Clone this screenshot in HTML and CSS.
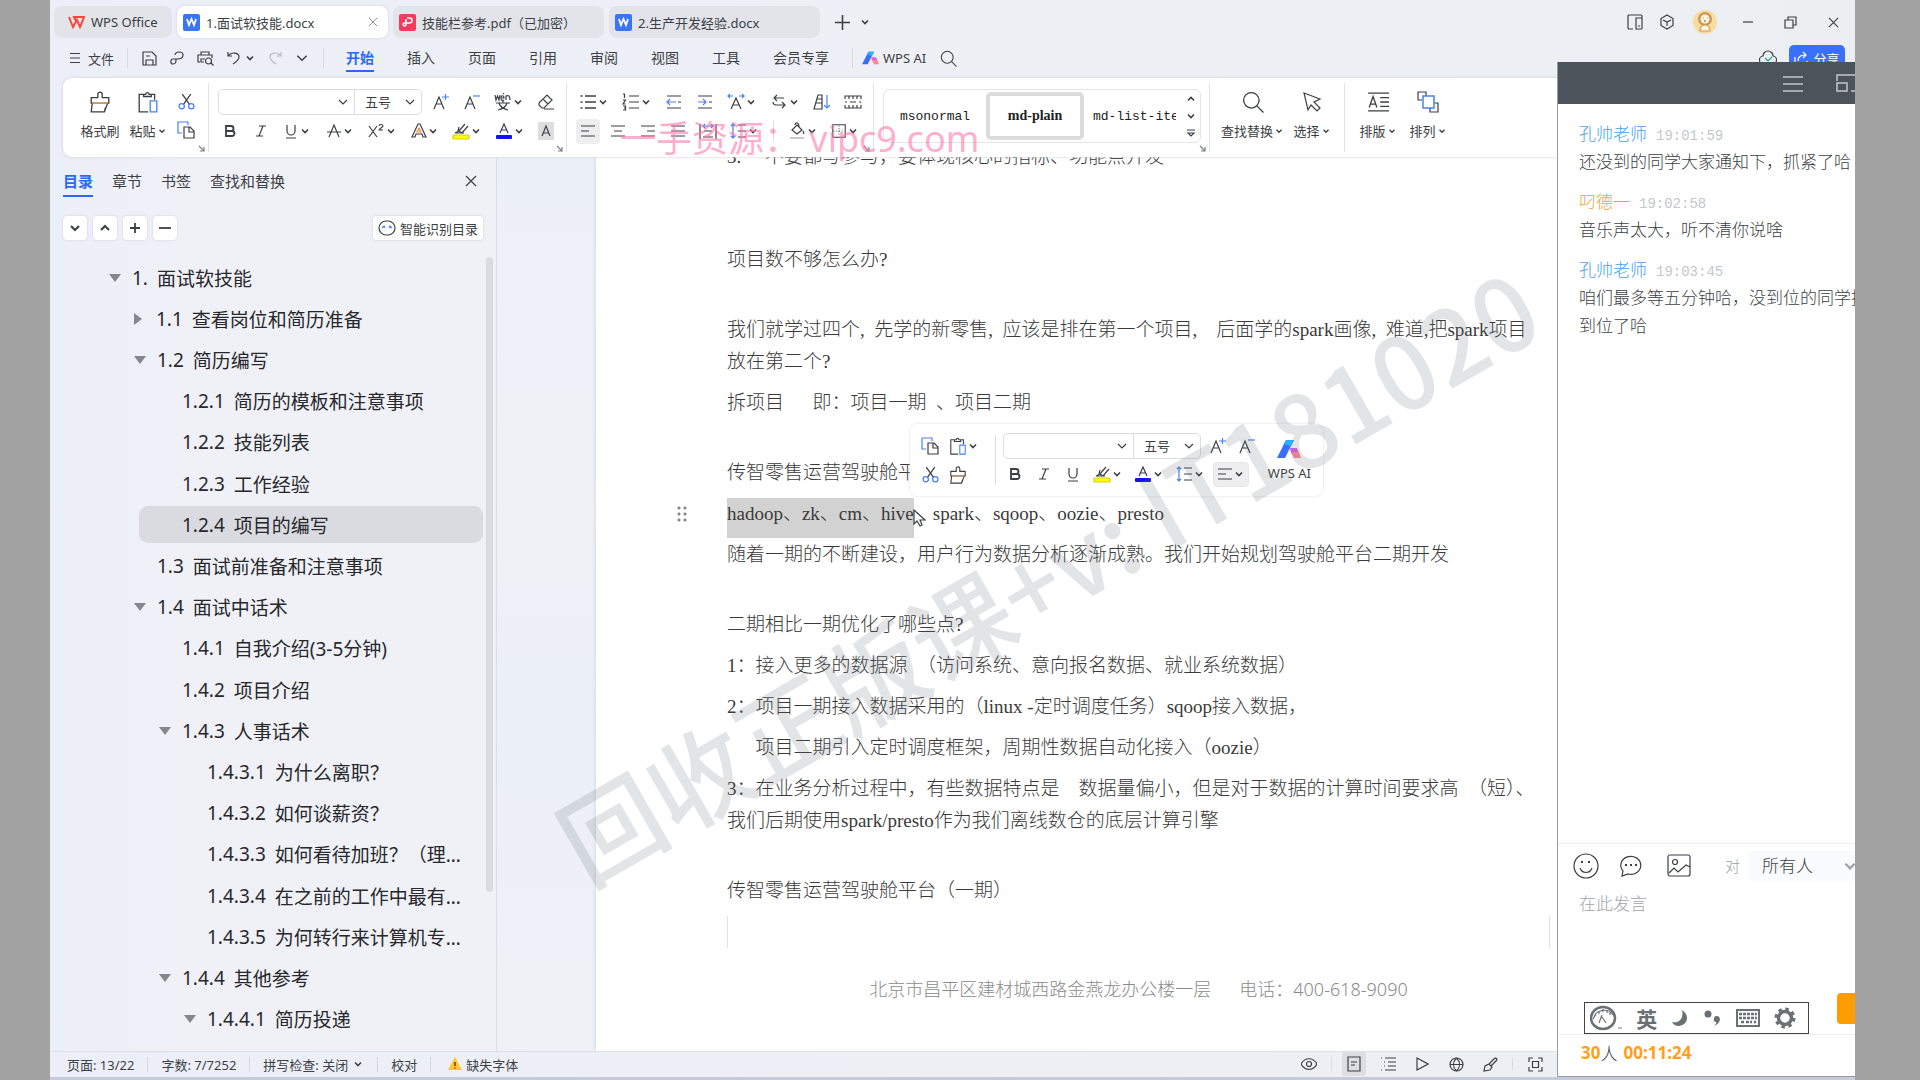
FILE: index.html
```html
<!DOCTYPE html>
<html lang="zh-CN">
<head>
  <meta charset="utf-8">
  <title>1.面试软技能.docx - WPS Office</title>
  <meta name="viewport" content="width=device-width, initial-scale=1">
  <link rel="stylesheet" href="styles.css">
</head>
<body>

  <!-- Shared icons -->
  <svg class="sprite" aria-hidden="true">
    <symbol id="i-down" viewBox="0 0 12 12"><path d="M3 4.5l3 3 3-3" stroke-width="1.6"/></symbol>
    <symbol id="i-up" viewBox="0 0 12 12"><path d="M3 7.5l3-3 3 3" stroke-width="1.6"/></symbol>
    <symbol id="i-thin-down" viewBox="0 0 12 12"><path d="M2 4l4 4 4-4"/></symbol>
    <symbol id="i-close" viewBox="0 0 12 12"><path d="M1 1l10 10M11 1L1 11"/></symbol>
    <symbol id="i-corner" viewBox="0 0 8 8"><path d="M1 1l5 5M6 2v4H2"/></symbol>
    <symbol id="i-brush" viewBox="0 0 20 20"><path d="M8 6V3a2 2 0 0 1 4 0v3h6v5H2V6zM3 11l-1 8h12l3-8M14 19l1-4"/><path d="M3 11h14" stroke="#e9a36b"/></symbol>
    <symbol id="i-paste" viewBox="0 0 20 20"><path d="M6 3H2v16h8M13 3h3v5M6 5V3h2a1.500 1.500 0 0 1 3 0h2v2z"/><path d="M12 9h6v10h-6z" class="blue"/></symbol>
    <symbol id="i-cut" viewBox="0 0 16 16"><path d="M4 1l7 10M12 1L5 11"/><circle cx="3.500" cy="12.500" r="2.500" class="blue"/><circle cx="12.500" cy="12.500" r="2.500" class="blue"/></symbol>
    <symbol id="i-copy" viewBox="0 0 18 18"><path d="M5 12H1V1h10v3" class="blue"/><path d="M7 6h6l4 4v7H7zM12 6v5h5"/></symbol>
    <symbol id="i-grow" viewBox="0 0 18 18"><path d="M2 16L7 4l5 12M4 11h6"/><path d="M10 4h7M13.500 1v6" class="blue"/></symbol>
    <symbol id="i-shrink" viewBox="0 0 18 18"><path d="M2 16L7 4l5 12M4 11h6"/><path d="M10 3h7" class="blue"/></symbol>
    <symbol id="i-pinyin" viewBox="0 0 18 18"><path d="M1 2l1 5 1.500-4L5 7l1-5M7 5h3c0-3-3-3-3 0s2 3 3 2M9 1l1-1M12 7V3c3-1 4 0 4 4M2 10h14M9 8v2M5 10c1 4 5 6 9 7M13 10c-1 4-5 6-9 7"/></symbol>
    <symbol id="i-eraser" viewBox="0 0 18 18"><path d="M2 10l8-8 5 5-8 8H5l-3-3zM6 6l5 5M7 16h10"/></symbol>
    <symbol id="i-bold" viewBox="0 0 16 16"><path d="M4 3h5a2.500 2.500 0 0 1 0 5H4zM4 8h6a2.500 2.500 0 0 1 0 5H4z" stroke-width="1.8"/></symbol>
    <symbol id="i-italic" viewBox="0 0 16 16"><path d="M6 3h7M3 13h7M10 3L6 13"/></symbol>
    <symbol id="i-underline" viewBox="0 0 16 16"><path d="M4 2v6a4 4 0 0 0 8 0V2M3 15h10"/></symbol>
    <symbol id="i-strike" viewBox="0 0 16 16"><path d="M3 14L8 2l5 12M1 9h14"/></symbol>
    <symbol id="i-super" viewBox="0 0 18 16"><path d="M2 3l8 11M10 3L2 14M12 3c0-2 4-2 4 0 0 1-4 3-4 4h4"/></symbol>
    <symbol id="i-effect" viewBox="0 0 16 16"><path d="M1 14L7 1h2l6 13h-3l-1-3H5l-1 3z"/><path d="M6 9l2-4 2 4z" stroke="#f08a3c"/></symbol>
    <symbol id="i-marker" viewBox="0 0 18 18"><path d="M3 11l4-2 6-7M7 9l3 2 6-7M7 5l-1 4M3 11h9"/><rect x="1" y="13" width="16" height="4" rx="1" fill="#ffff00" stroke="#d3d300"/></symbol>
    <symbol id="i-color" viewBox="0 0 18 18"><path d="M5 11l4-9 4 9M6.500 8h5"/><rect x="1" y="13" width="16" height="4" rx="1" fill="#1212f2" stroke="none"/></symbol>
    <symbol id="i-shade" viewBox="0 0 18 18"><rect x="1" y="0" width="16" height="18" fill="#dedede" stroke="none"/><path d="M5 14l4-10 4 10M6 11h6"/></symbol>
    <symbol id="i-bullets" viewBox="0 0 18 18"><path d="M6 3h11M6 9h11M6 15h11M1.500 3h2M1.500 9h2M1.500 15h2" stroke-width="1.300"/></symbol>
    <symbol id="i-numbers" viewBox="0 0 18 18"><path d="M7 3h10M7 9h10M7 15h10M1 1h1.500v4M1 7h2.500L1 11h2.500M1 13h2.500v4H1M2 15h1"/></symbol>
    <symbol id="i-outdent" viewBox="0 0 18 18"><path d="M2 3h14M13 9h3M2 15h14"/><path d="M2 9h9M5 6L2 9l3 3" class="blue"/></symbol>
    <symbol id="i-indent" viewBox="0 0 18 18"><path d="M2 3h14M13 9h3M2 15h14"/><path d="M2 9h8M7 6l3 3-3 3" class="blue"/></symbol>
    <symbol id="i-scale" viewBox="0 0 18 18"><path d="M4 16L9 5l5 11M6 12h6"/><path d="M1 3h5M3 1L1 3l2 2M12 3h5M15 1l2 2-2 2" class="blue"/></symbol>
    <symbol id="i-wrap" viewBox="0 0 18 18"><path d="M7 2L4 5l3 3M4 5h10M12 9l3 3-3 3M15 12H6a3 3 0 0 1-3-3"/></symbol>
    <symbol id="i-sort" viewBox="0 0 18 18"><path d="M1 16L5 2h4v14zM4 6h5M3 10h6M9 16H1"/><path d="M14 2v13M11 12l3 3 3-3" class="blue"/></symbol>
    <symbol id="i-tabs" viewBox="0 0 18 18"><path d="M1 6V3h16v3M1 12v3h16v-3M5 3v3M9 3v3M13 3v3M5 12v3M9 12v3M13 12v3M1 9h2M6 9h6M15 9h2"/></symbol>
    <symbol id="i-left" viewBox="0 0 16 16"><path d="M1 3h14M1 8h8M1 13h14"/></symbol>
    <symbol id="i-center" viewBox="0 0 16 16"><path d="M1 3h14M4 8h8M1 13h14"/></symbol>
    <symbol id="i-right" viewBox="0 0 16 16"><path d="M1 3h14M7 8h8M1 13h14"/></symbol>
    <symbol id="i-justify" viewBox="0 0 16 16"><path d="M1 3h14M1 8h14M1 13h14"/></symbol>
    <symbol id="i-spread" viewBox="0 0 18 18"><path d="M1 2v15M17 2v15M5 9h8M4 15h10"/><path d="M4 4h10M6 2L4 4l2 2M12 2l2 2-2 2" class="blue"/></symbol>
    <symbol id="i-spacing" viewBox="0 0 18 18"><path d="M9 3h8M9 9h8M9 15h8"/><path d="M4 2v14M2 4l2-2 2 2M2 14l2 2 2-2" class="blue"/></symbol>
    <symbol id="i-fill" viewBox="0 0 18 18"><path d="M4 8l5-5 5 5-5 4zM7 3c0-3 4-3 4 2M15 9l1 3"/><path d="M2 16h14" stroke="#c9c9c9" stroke-width="2"/></symbol>
    <symbol id="i-border" viewBox="0 0 18 18"><path d="M2 2h14v14H2z"/><path d="M9 3v12M3 9h12" stroke-dasharray="1 2"/></symbol>
    <symbol id="i-search" viewBox="0 0 20 20"><circle cx="8.500" cy="8.500" r="7"/><path d="M13.500 13.500l6 6"/></symbol>
    <symbol id="i-arrow" viewBox="0 0 20 20"><path d="M2 1l16 6-6 3 6 6-3 3-6-6-3 5z"/></symbol>
    <symbol id="i-typeset" viewBox="0 0 20 20"><path d="M1 2h19M1 18h19M2 15L5.500 5 9 15M3 12h5M12 6h8M12 10h8M12 14h8"/></symbol>
    <symbol id="i-arrange" viewBox="0 0 22 22"><path d="M5 9H1V1h8v4M17 12h4v9h-8v-4"/><path d="M6 5h11v12H6z" class="blue" stroke-width="1.500"/></symbol>
    <symbol id="i-ai" viewBox="0 0 24 20"><path d="M9 1h8L8 19H0z" fill="#3a6cff" stroke="none"/><path d="M9 1h8l-3 6-7-2z" fill="#26b0ff" stroke="none"/><path d="M13 9h7l2 5h-8z" fill="#d95fe8" stroke="none"/><path d="M14 13h8l2 6h-7z" fill="#ff8799" stroke="none"/></symbol>
    <symbol id="i-word" viewBox="0 0 17 17"><rect width="17" height="17" rx="2" fill="#3a74f7" stroke="none"/><path d="M4 5l2 6 2.500-6 2.500 6 2-6" stroke="#fff" stroke-width="1.800"/></symbol>
  </svg>

  <div class="window">

    <!-- Title bar -->
    <div class="titlebar">
      <button class="tab tab-home">
        <svg width="17" height="13" viewBox="0 0 17 13"><path d="M1 1l4 10 4-7 3 7 4-10H6l2 4" stroke="#f5483b" stroke-width="2"/></svg>
        WPS Office
      </button>
      <button class="tab active"><svg width="17" height="17"><use href="#i-word"/></svg>1.面试软技能.docx<svg class="tab-close" width="10" height="10"><use href="#i-close"/></svg></button>
      <button class="tab">
        <svg width="17" height="17" viewBox="0 0 17 17"><rect width="17" height="17" rx="2" fill="#f8385c" stroke="none"/><path d="M8 4h2.500a2 2 0 0 1 0 5H5a1.500 1.500 0 1 0 2 2V5" stroke="#fff" stroke-width="1.600"/></svg>
        技能栏参考.pdf（已加密）
      </button>
      <button class="tab"><svg width="17" height="17"><use href="#i-word"/></svg>2.生产开发经验.docx</button>
      <button class="new-tab"><svg width="15" height="15" viewBox="0 0 15 15"><path d="M7.500 0v15M0 7.500h15" stroke-width="1.600"/></svg></button>
      <button class="plain"><svg width="12" height="12"><use href="#i-down"/></svg></button>
      <div class="win-tools">
        <button><svg width="16" height="16" viewBox="0 0 16 16"><path d="M6 15H2a1 1 0 0 1-1-1V2a1 1 0 0 1 1-1h12a1 1 0 0 1 1 1v12a1 1 0 0 1-1 1H9V4h6M11 12h2"/></svg></button>
        <button><svg width="16" height="16" viewBox="0 0 16 16"><path d="M8 1l6 3.500v7L8 15l-6-3.500v-7zM4 6l4 2 4-2M8 8v4"/></svg></button>
        <button><svg width="24" height="26" viewBox="0 0 24 26"><circle cx="12" cy="13" r="12" fill="#f9dc9f" stroke="none"/><circle cx="12" cy="10" r="7" fill="#c79a58" stroke="none"/><circle cx="12" cy="10" r="4.500" fill="#fff4dc" stroke="none"/><path d="M10 9h.5M14 9h.5M11 12h2" stroke="#7a5b2e"/><path d="M7 22c0-8 10-8 10 0z" fill="#fff4dc" stroke="#c79a58"/></svg></button>
        <button><svg width="12" height="12" viewBox="0 0 12 12"><path d="M1 6h10"/></svg></button>
        <button><svg width="13" height="13" viewBox="0 0 13 13"><path d="M1 4h8v8H1zM4 4V1h8v8H9"/></svg></button>
        <button><svg width="11" height="11"><use href="#i-close"/></svg></button>
      </div>
    </div>

    <!-- Menu row -->
    <div class="menubar">
      <button class="file-btn"><svg width="10" height="12" viewBox="0 0 10 12"><path d="M0 1.500h10M0 6h10M0 10.500h10"/></svg>文件</button>
      <span class="sep"></span>
      <div class="quick">
        <button><svg width="15" height="15" viewBox="0 0 15 15"><path d="M1 1h9l4 4v9H1zM4 14V9h7v5M4 5h4"/></svg></button>
        <button><svg width="14" height="15" viewBox="0 0 14 15"><path d="M5 4c0-4 8-4 8 0s-4 4-6 4H3c-3 0-3 5 0 5s3-2 3-5"/></svg></button>
        <button><svg width="17" height="15" viewBox="0 0 17 15"><path d="M4 4V1h8v3M7 11H4V8h4M3 11H1V4h14v3"/><circle cx="11.500" cy="10" r="3"/><path d="M14 12l2.500 2.500"/></svg></button>
        <button class="with-arrow"><svg width="13" height="14" viewBox="0 0 13 14"><path d="M1 1v4h4M1 5c4-5 11-3 11 1 0 3-3 5-6 7"/></svg><svg width="12" height="12"><use href="#i-down"/></svg></button>
        <button class="muted"><svg width="13" height="14" viewBox="0 0 13 14"><path d="M12 1v4H8M12 5C8 0 1 2 1 6c0 3 3 5 6 7"/></svg></button>
        <button><svg width="14" height="14"><use href="#i-thin-down"/></svg></button>
      </div>
      <span class="sep"></span>
      <nav class="menu-tabs">
        <button class="active">开始</button>
        <button>插入</button>
        <button>页面</button>
        <button>引用</button>
        <button>审阅</button>
        <button>视图</button>
        <button>工具</button>
        <button>会员专享</button>
      </nav>
      <span class="sep"></span>
      <button class="ai-btn"><svg width="17" height="14"><use href="#i-ai"/></svg>WPS AI</button>
      <button class="plain"><svg width="17" height="17"><use href="#i-search"/></svg></button>
      <div class="share">
        <svg width="18" height="16" viewBox="0 0 18 16"><path d="M5 14a4 4 0 0 1-1-8 5 5 0 0 1 10 0 4 4 0 0 1-1 8z"/><path d="M6 8l3 3 4-4" stroke="#1aa382"/></svg>
        <button class="share-btn"><svg width="15" height="15" viewBox="0 0 15 15"><path d="M1 6v8h12v-4M4 10c0-5 4-6 8-6M9 1l3 3-3 3"/></svg>分享</button>
      </div>
    </div>

    <!-- Ribbon -->
    <div class="ribbon">
      <div class="group clip-group">
        <button class="big"><svg width="22" height="22"><use href="#i-brush"/></svg><span>格式刷</span></button>
        <button class="big"><svg width="22" height="22"><use href="#i-paste"/></svg><span>粘贴<svg width="10" height="10"><use href="#i-down"/></svg></span></button>
        <div class="stack">
          <button class="icon"><svg width="17" height="17"><use href="#i-cut"/></svg></button>
          <button class="icon"><svg width="18" height="18"><use href="#i-copy"/></svg></button>
        </div>
        <svg class="launcher" width="8" height="8"><use href="#i-corner"/></svg>
      </div>

      <div class="group stack">
        <div class="row spread">
          <div class="combo">
            <label class="pick font-name"><select aria-label="字体"><option></option></select><svg width="12" height="12"><use href="#i-thin-down"/></svg></label>
            <label class="pick font-size"><select aria-label="字号"><option>五号</option></select><svg width="12" height="12"><use href="#i-thin-down"/></svg></label>
          </div>
          <button class="icon"><svg width="18" height="18"><use href="#i-grow"/></svg></button>
          <button class="icon"><svg width="18" height="18"><use href="#i-shrink"/></svg></button>
          <button class="icon drop"><svg width="18" height="18"><use href="#i-pinyin"/></svg><svg width="12" height="12"><use href="#i-down"/></svg></button>
          <button class="icon"><svg width="18" height="18"><use href="#i-eraser"/></svg></button>
        </div>
        <div class="row spread">
          <button class="icon"><svg width="16" height="16"><use href="#i-bold"/></svg></button>
          <button class="icon"><svg width="16" height="16"><use href="#i-italic"/></svg></button>
          <button class="icon drop"><svg width="16" height="16"><use href="#i-underline"/></svg><svg width="12" height="12"><use href="#i-down"/></svg></button>
          <button class="icon drop"><svg width="16" height="16"><use href="#i-strike"/></svg><svg width="12" height="12"><use href="#i-down"/></svg></button>
          <button class="icon drop"><svg width="18" height="16"><use href="#i-super"/></svg><svg width="12" height="12"><use href="#i-down"/></svg></button>
          <button class="icon drop"><svg width="16" height="16"><use href="#i-effect"/></svg><svg width="12" height="12"><use href="#i-down"/></svg></button>
          <button class="icon drop"><svg width="18" height="18"><use href="#i-marker"/></svg><svg width="12" height="12"><use href="#i-down"/></svg></button>
          <button class="icon drop"><svg width="18" height="18"><use href="#i-color"/></svg><svg width="12" height="12"><use href="#i-down"/></svg></button>
          <button class="icon"><svg width="18" height="18"><use href="#i-shade"/></svg></button>
        </div>
        <svg class="launcher" width="8" height="8"><use href="#i-corner"/></svg>
      </div>

      <div class="group stack">
        <div class="row spread">
          <button class="icon drop"><svg width="18" height="18"><use href="#i-bullets"/></svg><svg width="12" height="12"><use href="#i-down"/></svg></button>
          <button class="icon drop"><svg width="18" height="18"><use href="#i-numbers"/></svg><svg width="12" height="12"><use href="#i-down"/></svg></button>
          <button class="icon"><svg width="18" height="18"><use href="#i-outdent"/></svg></button>
          <button class="icon"><svg width="18" height="18"><use href="#i-indent"/></svg></button>
          <button class="icon drop"><svg width="18" height="18"><use href="#i-scale"/></svg><svg width="12" height="12"><use href="#i-down"/></svg></button>
          <button class="icon drop"><svg width="18" height="18"><use href="#i-wrap"/></svg><svg width="12" height="12"><use href="#i-down"/></svg></button>
          <button class="icon"><svg width="18" height="18"><use href="#i-sort"/></svg></button>
          <button class="icon"><svg width="18" height="18"><use href="#i-tabs"/></svg></button>
        </div>
        <div class="row">
          <button class="icon on"><svg width="16" height="16"><use href="#i-left"/></svg></button>
          <button class="icon"><svg width="16" height="16"><use href="#i-center"/></svg></button>
          <button class="icon"><svg width="16" height="16"><use href="#i-right"/></svg></button>
          <button class="icon"><svg width="16" height="16"><use href="#i-justify"/></svg></button>
          <button class="icon"><svg width="18" height="18"><use href="#i-spread"/></svg></button>
          <button class="icon drop"><svg width="18" height="18"><use href="#i-spacing"/></svg><svg width="12" height="12"><use href="#i-down"/></svg></button>
          <span class="sep"></span>
          <button class="icon drop"><svg width="18" height="18"><use href="#i-fill"/></svg><svg width="12" height="12"><use href="#i-down"/></svg></button>
          <button class="icon drop"><svg width="16" height="16"><use href="#i-border"/></svg><svg width="12" height="12"><use href="#i-down"/></svg></button>
        </div>
        <svg class="launcher" width="8" height="8"><use href="#i-corner"/></svg>
      </div>

      <div class="group">
        <div class="gallery">
          <button class="style mono">msonormal</button>
          <button class="style chosen">md-plain</button>
          <button class="style mono cut">md-list-item</button>
          <div class="gallery-nav">
            <button><svg width="12" height="12"><use href="#i-up"/></svg></button>
            <button><svg width="12" height="12"><use href="#i-down"/></svg></button>
            <button><svg width="12" height="12" viewBox="0 0 12 12"><path d="M2 3h8M3 6h6L6 9z"/></svg></button>
          </div>
        </div>
        <svg class="launcher" width="8" height="8"><use href="#i-corner"/></svg>
      </div>

      <div class="group big-group">
        <button class="big"><svg width="22" height="22"><use href="#i-search"/></svg><span>查找替换<svg width="10" height="10"><use href="#i-down"/></svg></span></button>
        <button class="big"><svg width="20" height="22"><use href="#i-arrow"/></svg><span>选择<svg width="10" height="10"><use href="#i-down"/></svg></span></button>
      </div>
      <div class="group big-group">
        <button class="big"><svg width="22" height="22"><use href="#i-typeset"/></svg><span>排版<svg width="10" height="10"><use href="#i-down"/></svg></span></button>
        <button class="big"><svg width="22" height="22"><use href="#i-arrange"/></svg><span>排列<svg width="10" height="10"><use href="#i-down"/></svg></span></button>
      </div>
    </div>

    <div class="main">

      <!-- Outline -->
      <aside class="outline">
        <div class="outline-tabs">
          <button class="active">目录</button>
          <button>章节</button>
          <button>书签</button>
          <button>查找和替换</button>
          <button class="outline-close"><svg width="12" height="12"><use href="#i-close"/></svg></button>
        </div>
        <div class="outline-tools">
          <button class="square"><svg width="16" height="16"><use href="#i-down"/></svg></button>
          <button class="square"><svg width="16" height="16"><use href="#i-up"/></svg></button>
          <button class="square"><svg width="12" height="12" viewBox="0 0 12 12"><path d="M6 1v10M1 6h10" stroke-width="1.800"/></svg></button>
          <button class="square"><svg width="12" height="12" viewBox="0 0 12 12"><path d="M0 6h12" stroke-width="1.800"/></svg></button>
          <button class="smart"><svg width="18" height="16" viewBox="0 0 18 16"><rect x="1" y="1" width="16" height="14" rx="7"/><path d="M4 8l2-2 1 2M11 8l1-2 2 2" class="blue"/></svg>智能识别目录</button>
        </div>
        <div class="tree-wrap">
          <ul class="tree">
            <li class="l0 open"><b></b><i>1.</i>面试软技能</li>
            <li class="l1 shut"><b></b><i>1.1</i>查看岗位和简历准备</li>
            <li class="l1 open"><b></b><i>1.2</i>简历编写</li>
            <li class="l2"><b></b><i>1.2.1</i>简历的模板和注意事项</li>
            <li class="l2"><b></b><i>1.2.2</i>技能列表</li>
            <li class="l2"><b></b><i>1.2.3</i>工作经验</li>
            <li class="l2 current"><b></b><i>1.2.4</i>项目的编写</li>
            <li class="l1"><b></b><i>1.3</i>面试前准备和注意事项</li>
            <li class="l1 open"><b></b><i>1.4</i>面试中话术</li>
            <li class="l2"><b></b><i>1.4.1</i>自我介绍(3-5分钟)</li>
            <li class="l2"><b></b><i>1.4.2</i>项目介绍</li>
            <li class="l2 open"><b></b><i>1.4.3</i>人事话术</li>
            <li class="l3"><b></b><i>1.4.3.1</i>为什么离职？</li>
            <li class="l3"><b></b><i>1.4.3.2</i>如何谈薪资？</li>
            <li class="l3"><b></b><i>1.4.3.3</i>如何看待加班？（理…</li>
            <li class="l3"><b></b><i>1.4.3.4</i>在之前的工作中最有…</li>
            <li class="l3"><b></b><i>1.4.3.5</i>为何转行来计算机专…</li>
            <li class="l2 open"><b></b><i>1.4.4</i>其他参考</li>
            <li class="l3 open"><b></b><i>1.4.4.1</i>简历投递</li>
          </ul>
          <div class="scroll"></div>
        </div>
      </aside>

      <!-- Document -->
      <div class="canvas">
        <div class="page">
          <p class="first">3.&nbsp;&nbsp;&nbsp;&nbsp;&nbsp;不要都写参与，要体现核心的指标、功能点开发</p>
          <p class="blank"></p>
          <p class="blank"></p>
          <p>项目数不够怎么办?</p>
          <p class="blank"></p>
          <p>我们就学过四个,&nbsp;&nbsp;先学的新零售,&nbsp;&nbsp;应该是排在第一个项目,&nbsp;&nbsp;&nbsp;&nbsp;后面学的spark画像,&nbsp;&nbsp;难道,把spark项目<br>放在第二个?</p>
          <p>拆项目&nbsp;&nbsp;&nbsp;&nbsp;&nbsp;&nbsp;即：项目一期&nbsp;&nbsp;、项目二期</p>
          <p class="blank"></p>
          <p>传智零售运营驾驶舱平台（二期）</p>
          <p class="picked"><span class="handle"></span><mark>hadoop、zk、cm、hive</mark>、spark、sqoop、oozie、presto</p>
          <p>随着一期的不断建设，用户行为数据分析逐渐成熟。我们开始规划驾驶舱平台二期开发</p>
          <p class="blank"></p>
          <p>二期相比一期优化了哪些点?</p>
          <p>1：接入更多的数据源&nbsp;&nbsp;（访问系统、意向报名数据、就业系统数据）</p>
          <p>2：项目一期接入数据采用的（linux -定时调度任务）sqoop接入数据，</p>
          <p>&nbsp;&nbsp;&nbsp;&nbsp;&nbsp;&nbsp;项目二期引入定时调度框架，周期性数据自动化接入（oozie）</p>
          <p>3：在业务分析过程中，有些数据特点是&nbsp;&nbsp;&nbsp;&nbsp;数据量偏小，但是对于数据的计算时间要求高&nbsp;&nbsp;（短）、<br>我们后期使用spark/presto作为我们离线数仓的底层计算引擎</p>
          <p class="blank"></p>
          <p>传智零售运营驾驶舱平台（一期）</p>
          <div class="table-edge"></div>
          <footer class="page-foot"><span>北京市昌平区建材城西路金燕龙办公楼一层</span><span>电话：400-618-9090</span></footer>
        </div>
      </div>
    </div>

    <!-- Status bar -->
    <div class="status">
      <button>页面: 13/22</button>
      <button>字数: 7/7252</button>
      <button>拼写检查: 关闭<svg width="12" height="12"><use href="#i-down"/></svg></button>
      <button>校对</button>
      <button class="warn"><svg width="14" height="14" viewBox="0 0 14 14"><path d="M7 1l6 11.500H1z" fill="#ffc53d" stroke="#ffc53d"/><path d="M7 5v4M7 10.500v1" stroke="#7a3b00" stroke-width="1.500"/></svg>缺失字体</button>
      <div class="views">
        <button><svg width="16" height="16" viewBox="0 0 16 16"><path d="M0 8c4-7 12-7 16 0-4 7-12 7-16 0z"/><circle cx="8" cy="8" r="2.500"/></svg></button>
        <span class="sep"></span>
        <button class="on"><svg width="14" height="16" viewBox="0 0 14 16"><path d="M1 1h12v14H1zM4 6h6M4 9h4"/></svg></button>
        <button><svg width="15" height="14" viewBox="0 0 15 14"><path d="M4 1h11M7 5h8M7 9h8M4 13h11M0 1h1M3 5h1M3 9h1M0 13h1"/></svg></button>
        <button><svg width="14" height="14" viewBox="0 0 14 14"><path d="M2 1l11 6-11 6z"/></svg></button>
        <button><svg width="15" height="15" viewBox="0 0 15 15"><circle cx="7.500" cy="7.500" r="6.500"/><path d="M1 7.500h13M7.500 1c-4 4-4 9 0 13M7.500 1c4 4 4 9 0 13"/></svg></button>
        <button><svg width="15" height="15" viewBox="0 0 15 15"><path d="M6 7l5-5c2-2 4 0 2 2L8 9M6 7l3 3-2 3-6 1 1-5z"/></svg></button>
        <span class="sep"></span>
        <button><svg width="15" height="15" viewBox="0 0 15 15"><path d="M1 5V1h4M10 1h4v4M14 10v4h-4M5 14H1v-4M4.500 4.500h6v6h-6z"/></svg></button>
      </div>
    </div>

    <!-- Floating format bar -->
    <div class="mini">
      <div class="mini-clip">
        <button class="icon"><svg width="18" height="18"><use href="#i-copy"/></svg></button>
        <button class="icon drop"><svg width="18" height="18"><use href="#i-paste"/></svg><svg width="12" height="12"><use href="#i-down"/></svg></button>
        <button class="icon"><svg width="17" height="17"><use href="#i-cut"/></svg></button>
        <button class="icon"><svg width="18" height="18"><use href="#i-brush"/></svg></button>
      </div>
      <span class="sep"></span>
      <div class="mini-rows">
        <div class="row">
          <div class="combo">
            <label class="pick font-name"><select aria-label="字体"><option></option></select><svg width="12" height="12"><use href="#i-thin-down"/></svg></label>
            <label class="pick font-size"><select aria-label="字号"><option>五号</option></select><svg width="12" height="12"><use href="#i-thin-down"/></svg></label>
          </div>
          <button class="icon"><svg width="18" height="18"><use href="#i-grow"/></svg></button>
          <button class="icon"><svg width="18" height="18"><use href="#i-shrink"/></svg></button>
        </div>
        <div class="row">
          <button class="icon"><svg width="16" height="16"><use href="#i-bold"/></svg></button>
          <button class="icon"><svg width="16" height="16"><use href="#i-italic"/></svg></button>
          <button class="icon"><svg width="16" height="16"><use href="#i-underline"/></svg></button>
          <button class="icon drop"><svg width="18" height="18"><use href="#i-marker"/></svg><svg width="12" height="12"><use href="#i-down"/></svg></button>
          <button class="icon drop"><svg width="18" height="18"><use href="#i-color"/></svg><svg width="12" height="12"><use href="#i-down"/></svg></button>
          <button class="icon drop"><svg width="18" height="18"><use href="#i-spacing"/></svg><svg width="12" height="12"><use href="#i-down"/></svg></button>
          <button class="icon drop on"><svg width="16" height="16"><use href="#i-left"/></svg><svg width="12" height="12"><use href="#i-down"/></svg></button>
        </div>
      </div>
      <button class="mini-ai"><svg width="24" height="20"><use href="#i-ai"/></svg>WPS AI</button>
    </div>
    <svg class="cursor" width="13" height="18" viewBox="0 0 13 18"><path d="M1 1v14l3-3 3 5 2-1-2-5h5z" fill="#fff"/></svg>

    <!-- Watermarks -->
    <div class="watermark">回收正版课+v: IT181020</div>
    <div class="pink-mark">一手资源： vipc9.com</div>

    <!-- Chat -->
    <section class="chat">
      <div class="chat-head">
        <button><svg width="20" height="17" viewBox="0 0 20 17"><path d="M0 2h20M0 9h20M0 16h20" stroke-width="1.500"/></svg></button>
        <button><svg width="24" height="18" viewBox="0 0 24 18"><path d="M1 7V1h22v16h-8M1 9h10v8H1z" stroke-width="1.500"/></svg></button>
      </div>
      <div class="messages">
        <div class="msg"><span class="who">孔帅老师</span><time>19:01:59</time><p>还没到的同学大家通知下，抓紧了哈</p></div>
        <div class="msg"><span class="who student">叼德一</span><time>19:02:58</time><p>音乐声太大，听不清你说啥</p></div>
        <div class="msg"><span class="who">孔帅老师</span><time>19:03:45</time><p>咱们最多等五分钟哈，没到位的同学抓紧<br>到位了哈</p></div>
      </div>
      <div class="chat-tools">
        <button><svg width="26" height="26" viewBox="0 0 26 26"><circle cx="13" cy="13" r="12"/><path d="M7 15c2 6 10 6 12 0"/><path d="M9 8v2M16 8v2" stroke-width="2"/></svg></button>
        <button><svg width="24" height="23" viewBox="0 0 24 23"><path d="M4 17a10 9 0 1 1 5 3l-6 2z"/><path d="M6 11h2M11 11h2M16 11h2" stroke-width="2"/></svg></button>
        <button class="picture"><svg width="24" height="23" viewBox="0 0 24 23"><rect x="1" y="1" width="22" height="21" rx="2"/><circle cx="8" cy="8" r="2.500"/><path d="M2 19l5-5 4 4 8-7 4 2"/></svg></button>
        <label for="target">对</label>
        <div class="target"><select id="target"><option>所有人</option></select><svg width="18" height="18"><use href="#i-down"/></svg></div>
      </div>
      <textarea class="chat-input" aria-label="发言" placeholder="在此发言"></textarea>
      <div class="chat-send">
        <div class="ime">
          <svg width="32" height="26" viewBox="0 0 32 26"><ellipse cx="13" cy="13" rx="12" ry="11" stroke-width="2.500"/><path d="M4 13c1-8 14-11 19-3M9 18l3-8M12 12l4 6M6 9l-3 5M9 6v3M13 4v3M17 5v3M20 7v3"/><path d="M28 23h4" stroke="#8b9194"/></svg>
          <span>英</span>
          <svg width="18" height="18" viewBox="0 0 18 18"><path d="M11 1c8 5 6 15-3 16-4 0-6-2-7-4 8 2 12-5 10-12z" fill="#6a7174" stroke="none"/></svg>
          <svg width="18" height="18" viewBox="0 0 18 18"><circle cx="4" cy="5" r="3.500" fill="#6a7174" stroke="none"/><path d="M12 7c5-1 6 7-2 10 2-2 3-3 2-4-3 0-3-5 0-6z" fill="#6a7174" stroke="none"/></svg>
          <svg width="24" height="18" viewBox="0 0 24 18"><path d="M1 1h22v16H1z" stroke-width="2"/><path d="M3 5h18M3 9h18M5 13h3M10 13h6M18 13h2" stroke-width="2.500" stroke-dasharray="3 1"/></svg>
          <svg width="22" height="22" viewBox="0 0 22 22"><circle cx="11" cy="11" r="6.500" stroke-width="3.500"/><circle cx="11" cy="11" r="9" stroke-width="3" stroke-dasharray="3.500 3.570"/></svg>
        </div>
        <button class="send" aria-label="发送"></button>
      </div>
      <div class="chat-foot"><strong>30</strong>人<strong class="clock">00:11:24</strong></div>
    </section>

  </div>
</body>
</html>
```
FILE: styles.css
```css
* {
  box-sizing: border-box;
}

body {
  margin: 0;
  background: #a3a3a3;
  color: #3c3f44;
  font-family: "Noto Sans", "Noto Sans CJK SC", sans-serif;
  font-size: 13px;
}

svg {
  fill: none;
  stroke: currentColor;
  stroke-width: 1.2;
  flex: none;
}

.sprite {
  position: absolute;
  width: 0;
  height: 0;
}

.blue {
  stroke: #4a80f5;
}

button {
  display: flex;
  align-items: center;
  justify-content: center;
  padding: 0;
  border: none;
  background: none;
  color: inherit;
  font: inherit;
  white-space: nowrap;
}

select {
  appearance: none;
  border: none;
  background: none;
  color: inherit;
  font: inherit;
  padding: 0;
  outline: none;
}

.window {
  position: relative;
  display: flex;
  flex-direction: column;
  height: 100vh;
  margin: 0 65px 0 50px;
  overflow: hidden;
  background: linear-gradient(90deg, #eceff8, #eff0f6 50%, #ebeff2);
  border-bottom: 3px solid #c6cbdc;
}

.sep {
  width: 1px;
  height: 20px;
  background: #d9dbe0;
}

/* Title bar */
.titlebar {
  display: flex;
  align-items: center;
  height: 44px;
  padding-left: 4px;
  gap: 5px;
}

.tab {
  justify-content: flex-start;
  gap: 6px;
  width: 211px;
  height: 32px;
  padding: 0 6px;
  border-radius: 8px;
  background: #e2e4ea;
}

.tab-home {
  width: 118px;
  padding: 0 14px;
}

.tab.active {
  background: #fff;
  box-shadow: 0 0 3px #cfd2da;
}

.tab-close {
  margin-left: auto;
  margin-right: 4px;
  color: #8c8f94;
}

.new-tab {
  margin: 0 4px 0 10px;
}

.win-tools {
  display: flex;
  align-items: center;
  margin-left: auto;
}

.win-tools button {
  width: 32px;
}

.win-tools button:nth-child(n+3) {
  width: 43px;
}

/* Menu row */
.menubar {
  display: flex;
  align-items: center;
  height: 34px;
  padding: 0 10px 6px 20px;
}

.file-btn {
  gap: 8px;
  margin-right: 13px;
}

.quick {
  display: flex;
  align-items: center;
  gap: 13px;
  margin: 0 14px;
}

.quick .with-arrow {
  gap: 4px;
}

.muted {
  color: #b5b8be;
}

.menu-tabs {
  display: flex;
  gap: 33px;
  margin: 0 23px 0 22px;
  font-size: 14px;
}

.menu-tabs button {
  height: 28px;
  border-bottom: 2px solid transparent;
}

.menu-tabs .active,
.outline-tabs .active {
  color: #2c68f5;
  border-color: #2c68f5;
  font-weight: 700;
}

.ai-btn {
  gap: 4px;
  margin: 0 14px 0 9px;
}

.share {
  display: flex;
  align-items: center;
  gap: 12px;
  margin-left: auto;
}

.share-btn {
  gap: 4px;
  width: 56px;
  height: 26px;
  border-radius: 5px;
  background: #3a70f8;
  color: #fff;
}

/* Ribbon */
.ribbon {
  display: flex;
  flex: none;
  height: 79px;
  margin-left: 13px;
  border-radius: 9px 0 0 9px;
  background: #fff;
  box-shadow: 0 0 3px #c9ccd4;
  z-index: 1;
}

.group {
  position: relative;
  display: flex;
  padding: 11px 9px;
}

.group::after {
  content: "";
  position: absolute;
  right: 0;
  top: 5px;
  bottom: 5px;
  width: 1px;
  background: #e2e3e6;
}

.group:last-child::after {
  display: none;
}

.stack {
  display: flex;
  flex-direction: column;
  gap: 3px;
}

.row {
  display: flex;
  align-items: center;
  gap: 6px;
  height: 26px;
}

.row .sep {
  margin: 0 5px;
}

.row.spread {
  gap: 0;
  justify-content: space-between;
}

.clip-group {
  gap: 4px;
  width: 146px;
  padding-left: 15px;
}

.big {
  flex-direction: column;
  justify-content: space-between;
  min-width: 44px;
  height: 51px;
  padding: 2px 0 0;
  line-height: 18px;
}

.big span {
  display: flex;
  align-items: center;
  gap: 1px;
}

.icon {
  width: 24px;
  height: 25px;
  border-radius: 4px;
}

.icon.drop {
  width: 36px;
}

.icon.on {
  background: #eeeeef;
}

.launcher {
  position: absolute;
  right: 3px;
  bottom: 4px;
  color: #7d8085;
}

.combo {
  display: flex;
  width: 204px;
  height: 26px;
  border: 1px solid #dcdde0;
  border-radius: 5px;
}

.pick {
  display: flex;
  align-items: center;
  padding-right: 5px;
}

.font-name {
  flex: 1;
  border-right: 1px solid #dcdde0;
}

.font-name select {
  flex: 1;
}

.font-size {
  width: 66px;
  justify-content: space-between;
  padding-left: 10px;
}

.ribbon .stack .row {
  width: 340px;
}

.ribbon .stack ~ .stack .row {
  width: 289px;
}

.gallery {
  display: flex;
  align-items: center;
  width: 318px;
  height: 54px;
  border: 1px solid #e4e5e7;
  border-radius: 6px;
}

.style {
  width: 98px;
  height: 48px;
  font: 700 14px "Liberation Serif", serif;
  color: #222;
}

.style.mono {
  font: 13px "Liberation Mono", monospace;
}

.style.mono:first-child {
  width: 102px;
}

.style.chosen {
  border: 4px solid #dcdcdc;
  border-radius: 5px;
}

.style.cut {
  width: 92px;
  padding-left: 9px;
  justify-content: flex-start;
  overflow: hidden;
}

.gallery-nav {
  display: flex;
  flex-direction: column;
  gap: 5px;
  margin-left: auto;
  padding-right: 3px;
}

.big-group {
  gap: 6px;
  padding: 11px;
}

/* Main area */
.main {
  display: flex;
  flex: 1;
  min-height: 0;
}

.outline {
  display: flex;
  flex-direction: column;
  flex: none;
  width: 447px;
  border-right: 1px solid #dadde4;
  background: linear-gradient(90deg, #ebeff9, #f0f1f7 30%);
}

.outline-tabs {
  display: flex;
  gap: 19px;
  padding: 9px 19px 0 13px;
  font-size: 15px;
}

.outline-tabs button {
  height: 31px;
  border-bottom: 2px solid transparent;
}

.outline-tabs .outline-close {
  margin-left: auto;
}

.outline-tools {
  display: flex;
  gap: 6px;
  padding: 19px 13px 17px;
}

.outline-tools button {
  height: 24px;
  border-radius: 4px;
  background: #fff;
  box-shadow: 0 0 2px #c4c7cf;
}

.square {
  width: 24px;
}

.outline-tools .smart {
  gap: 4px;
  margin-left: auto;
  padding: 0 5px;
}

.tree-wrap {
  display: flex;
  flex: 1;
  min-height: 0;
  padding-right: 3px;
}

.tree {
  display: flex;
  flex-direction: column;
  flex: 1;
  margin: 0 3px 11px 0;
  padding: 0;
  list-style: none;
  font-size: 19px;
  color: #26282c;
}

.tree li {
  display: flex;
  align-items: center;
  flex: 1;
  margin: 2px 0;
  white-space: nowrap;
}

.tree i {
  margin: 0 9px 0 11px;
  font-style: normal;
}

.tree b {
  width: 12px;
}

.tree .open b {
  border: 6px solid transparent;
  border-top: 8px solid #85878c;
  border-bottom: 0;
}

.tree .shut b {
  border: 6px solid transparent;
  border-left: 8px solid #85878c;
  border-right: 0;
  margin-right: -1px;
}

.l0 {
  padding-left: 59px;
}

.l1 {
  padding-left: 84px;
}

.l2 {
  padding-left: 109px;
}

.l3 {
  padding-left: 134px;
}

.tree .current {
  margin-left: 89px;
  padding-left: 20px;
  border-radius: 9px;
  background: #dadbe0;
}

.scroll {
  width: 7px;
  height: 80%;
  border-radius: 4px;
  background: #d9dbe1;
}

.canvas {
  display: flex;
  flex: 1;
  padding-left: 99px;
  overflow: hidden;
  background: linear-gradient(180deg, #ecf0f9, #f0f1f6 40%, #ebf0f7 60%, #eff1f6);
}

.page {
  flex: 1;
  min-width: 0;
  padding: 0 305px 0 131px;
  background: #fff;
  box-shadow: 0 0 4px #ccd0d8;
  font-family: "Liberation Serif", "Noto Sans CJK SC", serif;
  font-size: 19px;
  font-weight: 300;
  line-height: 32px;
  color: #3a3a3a;
  white-space: nowrap;
}

.page p {
  margin: 0 0 9px;
}

.page .first {
  margin: -16px 0 13px;
}

.page .blank {
  height: 29px;
  margin: 0;
}

.picked {
  position: relative;
}

.page mark {
  padding: 5px 0 14px;
  background: #d2d2d2;
  color: inherit;
}

.handle {
  position: absolute;
  left: -51px;
  top: 7px;
  width: 12px;
  height: 18px;
  background: radial-gradient(circle, #85878c 1px, transparent 2px) 0 0 / 6px 6px;
}

.table-edge {
  height: 32px;
  border: 1px solid #e2e2e2;
  border-width: 0 1px;
}

.page-foot {
  display: flex;
  justify-content: center;
  gap: 28px;
  padding-top: 25px;
  font-family: "Noto Sans", "Noto Sans CJK SC", sans-serif;
  font-size: 18px;
  color: #8a8a8a;
}

/* Status bar */
.status {
  display: flex;
  flex: none;
  align-items: center;
  height: 26px;
  padding: 0 308px 1px 4px;
  border-top: 1px solid #dcdfe6;
}

.status > button {
  height: 15px;
  padding: 0 13px;
  gap: 4px;
  border-right: 1px solid #d3d6dc;
}

.status > .warn {
  padding-left: 17px;
  border: none;
}

.views {
  display: flex;
  align-items: center;
  gap: 10px;
  margin-left: auto;
}

.views button {
  width: 24px;
  height: 24px;
  border-radius: 3px;
}

.views .sep {
  height: 14px;
}

.views .on {
  background: #dcdee4;
}

/* Floating format bar */
.mini {
  position: absolute;
  left: 860px;
  top: 424px;
  display: flex;
  align-items: center;
  width: 413px;
  height: 72px;
  padding: 0 12px 0 8px;
  border-radius: 8px;
  background: #fff;
  box-shadow: 0 0 3px #dedede;
}

.mini-clip {
  display: grid;
  grid-template-columns: 24px 40px;
  gap: 4px;
  margin-right: 9px;
}

.mini .sep {
  height: 50px;
  margin-right: 7px;
}

.mini-rows {
  display: flex;
  flex-direction: column;
  gap: 2px;
}

.mini .row {
  gap: 5px;
}

.mini .combo {
  width: 198px;
}

.mini .icon.on {
  border: 1px solid #e6e6e6;
}

.mini-ai {
  flex-direction: column;
  gap: 5px;
  margin-left: auto;
}

.cursor {
  position: absolute;
  left: 863px;
  top: 509px;
}

/* Watermarks */
.watermark {
  position: absolute;
  left: 996px;
  top: 573px;
  transform: translate(-50%, -50%) rotate(-30deg);
  font-family: "Noto Sans CJK SC", sans-serif;
  font-size: 101px;
  font-weight: 500;
  line-height: 1;
  white-space: nowrap;
  color: rgba(100, 110, 120, 0.19);
  pointer-events: none;
}

.pink-mark {
  position: absolute;
  left: 570px;
  top: 115px;
  z-index: 2;
  font-size: 36px;
  line-height: 48px;
  white-space: nowrap;
  color: rgba(255, 120, 170, 0.6);
  pointer-events: none;
}

/* Chat */
.chat {
  position: absolute;
  z-index: 3;
  top: 62px;
  right: 0;
  bottom: 0;
  display: flex;
  flex-direction: column;
  width: 298px;
  border-left: 1px solid #989ca3;
  background: #fff;
  font-size: 17px;
  font-weight: 300;
  overflow: hidden;
}

.chat-head {
  display: flex;
  flex: none;
  justify-content: flex-end;
  gap: 33px;
  height: 42px;
  margin-right: -5px;
  background: #4c535b;
  color: #c3c8cd;
}

.messages {
  flex: 1;
  padding: 16px 21px;
  line-height: 28px;
  white-space: nowrap;
}

.msg {
  margin-bottom: 12px;
}

.msg p {
  margin: 0;
}

.who {
  margin-right: 9px;
  color: #44a0f0;
}

.student {
  color: #f5a030;
}

.msg time {
  font: 14px "Liberation Mono", monospace;
  color: #c3c7cd;
}

.chat-tools {
  display: flex;
  align-items: center;
  gap: 20px;
  height: 44px;
  padding-left: 15px;
  border-top: 1px solid #eceef1;
}

.chat-tools .picture {
  margin-left: 4px;
}

.chat-tools label {
  margin-left: 14px;
  font-size: 15px;
  color: #9a9ea5;
}

.target {
  display: flex;
  align-items: center;
  height: 30px;
  margin-left: -12px;
  padding-left: 14px;
  background: #fafbfd;
}

.target select {
  width: 79px;
}

.target svg {
  color: #9ea2aa;
}

.chat-input {
  height: 106px;
  padding: 3px 21px;
  border: none;
  resize: none;
  font: inherit;
}

.chat-input::placeholder {
  color: #9fa3aa;
}

.chat-send {
  display: flex;
  justify-content: space-between;
  height: 42px;
  padding-left: 26px;
  border-bottom: 1px solid #eceef1;
}

.ime {
  display: flex;
  align-items: center;
  justify-content: space-between;
  align-self: flex-end;
  width: 225px;
  height: 32px;
  padding: 0 12px 0 5px;
  border: 1px solid #444;
  color: #6a7174;
}

.ime span {
  font-size: 21px;
  font-weight: 700;
}

.send {
  width: 18px;
  height: 31px;
  border-radius: 4px 0 0 4px;
  background: #ff9c00;
}

.chat-foot {
  display: flex;
  align-items: center;
  height: 42px;
  padding: 0 23px 6px;
  border-bottom: 1px solid #989ca3;
}

.chat-foot strong {
  color: #ff9f1a;
  font-weight: 700;
}

.clock {
  margin-left: 6px;
}
```
